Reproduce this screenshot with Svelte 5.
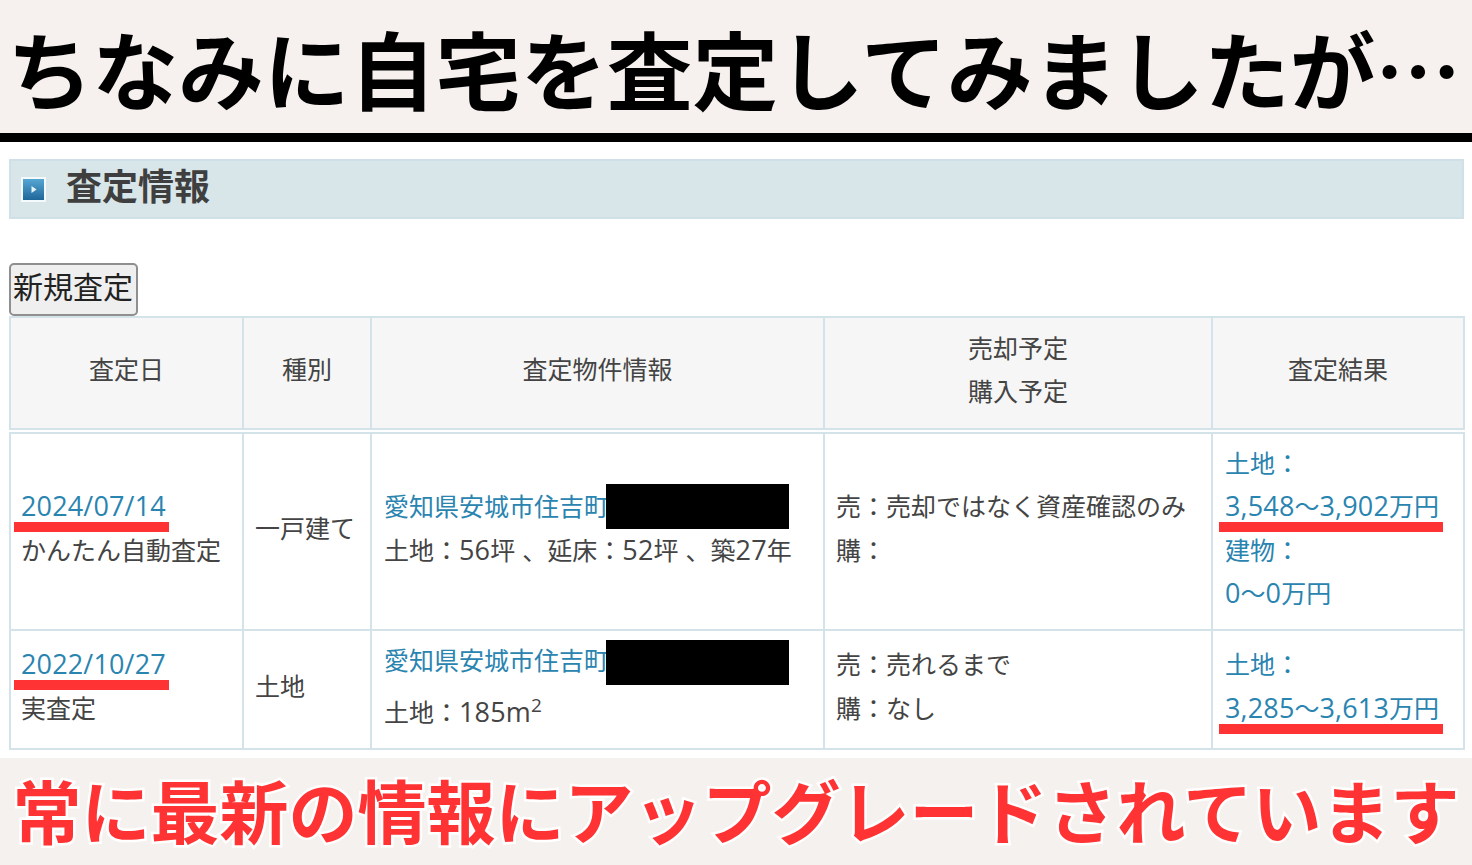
<script>
  const cols = [233, 128, 453, 388, 252];
</script>

<div class="page">
  <h1 class="top">ちなみに自宅を査定してみましたが…</h1>

  <main class="content">
    <h2 class="section">
      <span class="icon">
        <svg viewBox="0 0 25 25" width="25" height="25">
          <defs>
            <linearGradient id="blue" x1="0" y1="0" x2="0" y2="1">
              <stop offset="0" stop-color="#58a9d6" />
              <stop offset="1" stop-color="#1c6496" />
            </linearGradient>
          </defs>
          <rect x="1" y="1" width="23" height="23" fill="url(#blue)" stroke="#f4f9fb" stroke-width="2" />
          <path d="M10.5 9 L15.5 12.5 L10.5 16 Z" fill="#e8f3f8" />
        </svg>
      </span>
      <span class="section-text">査定情報</span>
    </h2>

    <button class="new">新規査定</button>

    <table class="head">
      <colgroup>{#each cols as w}<col style="width: {w}px" />{/each}</colgroup>
      <tbody>
        <tr>
          <th>査定日</th>
          <th>種別</th>
          <th>査定物件情報</th>
          <th>売却予定<br />購入予定</th>
          <th>査定結果</th>
        </tr>
      </tbody>
    </table>

    <table class="body">
      <colgroup>{#each cols as w}<col style="width: {w}px" />{/each}</colgroup>
      <tbody>
        <tr class="row-a">
          <td>
            <a class="link mark date"><span class="n">2024/07/14</span></a><br />かんたん自動査定
          </td>
          <td>一戸建て</td>
          <td>
            <a class="link addr">愛知県安城市住吉町<span class="mask"></span></a><br />
            <span class="spec">土地：<span class="n">56</span>坪 、延床：<span class="n">52</span>坪 、築<span class="n">27</span>年</span>
          </td>
          <td>売：売却ではなく資産確認のみ<br />購：</td>
          <td class="link">
            土地：<br />
            <span class="mark price"><span class="n">3,548</span>～<span class="n">3,902</span>万円</span><br />
            建物：<br />
            <span class="n">0</span>～<span class="n">0</span>万円
          </td>
        </tr>
        <tr class="row-b">
          <td>
            <a class="link mark date"><span class="n">2022/10/27</span></a><br />実査定
          </td>
          <td>土地</td>
          <td>
            <a class="link addr">愛知県安城市住吉町<span class="mask"></span></a><br />
            <span class="land">土地：<span class="n">185m<sup>2</sup></span></span>
          </td>
          <td>売：売れるまで<br />購：なし</td>
          <td class="link">
            土地：<br />
            <span class="mark price"><span class="n">3,285</span>～<span class="n">3,613</span>万円</span>
          </td>
        </tr>
      </tbody>
    </table>
  </main>

  <p class="bottom">常に最新の情報にアップグレードされています</p>
</div>

<style>
  :global(body) {
    margin: 0;
    background: #fff;
  }

  .page {
    width: 1472px;
    height: 865px;
    overflow: hidden;
    font-family: "Noto Sans CJK JP", "Noto Sans", sans-serif;
    color: #444;
  }

  .top {
    box-sizing: content-box;
    height: 133px;
    margin: 0;
    padding-right: 4px;
    background: #f6f1ef;
    border-bottom: 9px solid #000;
    font-size: 85.7px;
    font-weight: 700;
    line-height: 135px;
    color: #000;
    text-align: center;
    white-space: nowrap;
  }

  .content {
    padding: 17px 8px 0 9px;
  }

  .section {
    display: flex;
    align-items: center;
    gap: 20px;
    box-sizing: border-box;
    height: 60px;
    margin: 0;
    padding-left: 10px;
    background: #d8e6ea;
    border: 2px solid #cfe0e6;
    font-size: 36px;
    font-weight: 700;
    color: #3f3f3f;
  }

  .section-text {
    padding-bottom: 10px;
  }

  .icon {
    display: flex;
  }

  .new {
    display: block;
    box-sizing: border-box;
    width: 129px;
    height: 53px;
    margin: 44px 0 0;
    padding: 0 1px 10px 0;
    background: #efefef;
    border: 2px solid #8f8f8f;
    border-radius: 5px;
    font-family: inherit;
    font-size: 30px;
    line-height: 30px;
    color: #222;
  }

  table {
    width: 1454px;
    table-layout: fixed;
    border-collapse: collapse;
    font-size: 25px;
    line-height: 43.4px;
  }

  th,
  td {
    border: 2px solid #d3e3e9;
    padding: 0 11px 8px;
    font-weight: 400;
    white-space: nowrap;
  }

  td:first-child {
    padding-left: 10px;
  }

  td:nth-child(3),
  td:nth-child(5) {
    padding-left: 12px;
  }

  .head th {
    box-sizing: border-box;
    height: 112px;
    background: #f6f6f6;
    text-align: center;
  }

  .body {
    margin-top: 2px;
  }

  .row-a td {
    box-sizing: border-box;
    height: 197px;
  }

  .row-b td {
    box-sizing: border-box;
    height: 119px;
  }

  .link {
    color: #2a84b0;
  }

  .n {
    font-family: "Open Sans", sans-serif;
    font-size: 27px;
    letter-spacing: 0.15px;
  }

  .spec {
    word-spacing: 1.5px;
  }

  sup {
    font-size: 19px;
    line-height: 0;
  }

  .mark,
  .addr {
    position: relative;
    display: inline-block;
  }

  .mark::after {
    content: "";
    position: absolute;
    top: 38px;
    height: 10px;
    background: #ff3333;
  }

  .date::after {
    left: -7px;
    width: 155px;
  }

  .price::after {
    left: -6px;
    width: 224px;
  }

  .mask {
    position: absolute;
    left: 222px;
    top: 0;
    width: 183px;
    height: 45px;
    background: #000;
  }

  .row-b .mask {
    top: 2px;
  }

  .land {
    display: inline-block;
    margin-top: 8px;
  }

  .bottom {
    height: 107px;
    margin: 8px 0 0;
    background: #f5f1ee;
    font-size: 69px;
    font-weight: 700;
    line-height: 103px;
    color: #ff3333;
    text-align: center;
    white-space: nowrap;
    -webkit-text-stroke: 5px #fff;
    paint-order: stroke fill;
  }
</style>
